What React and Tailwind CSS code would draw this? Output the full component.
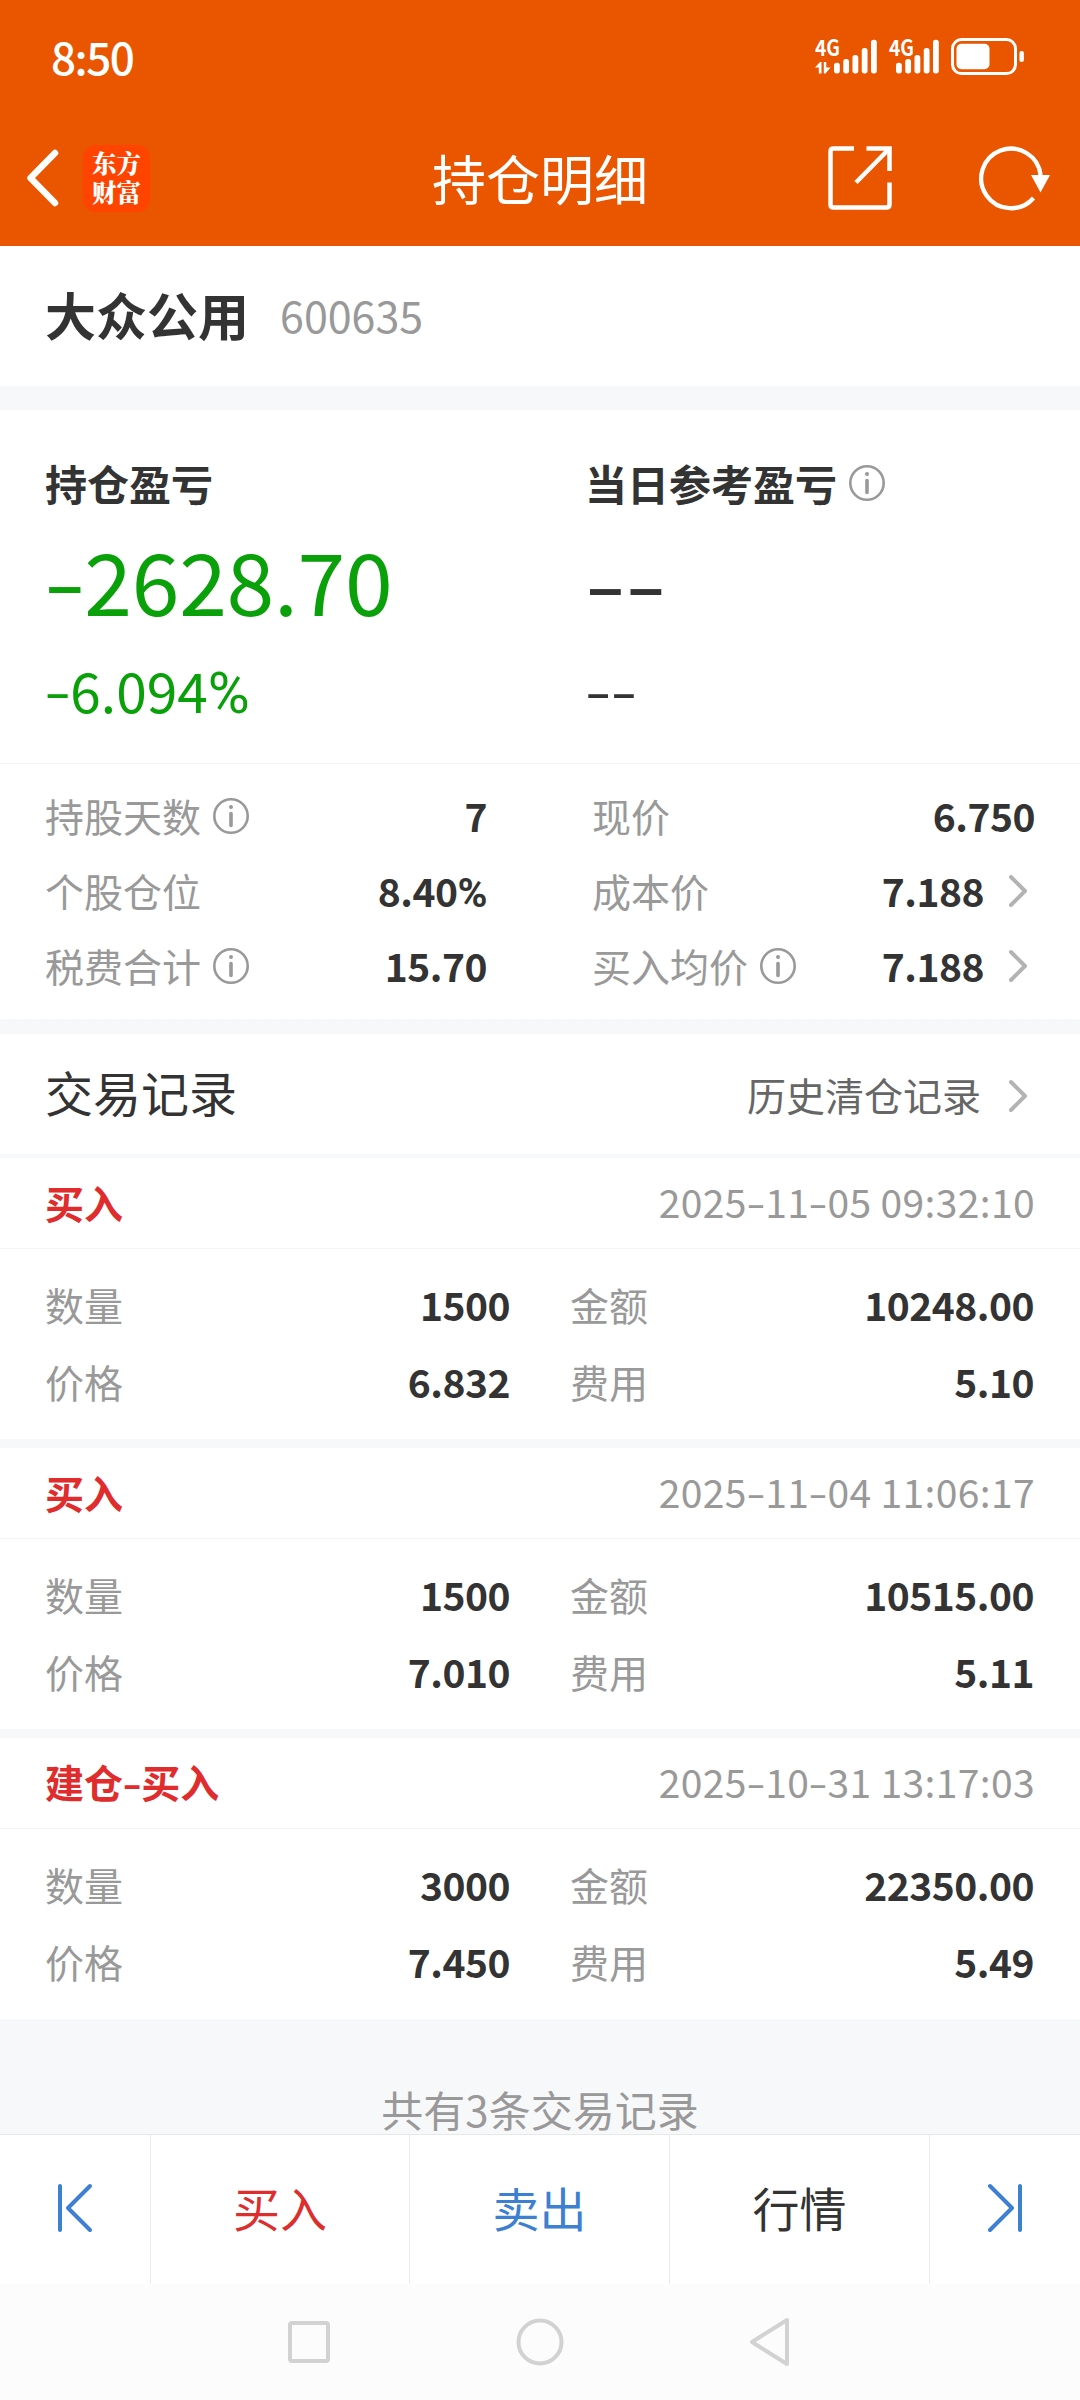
import React from "react";

const records = [
  { type: "买入", time: "2025-11-05 09:32:10", qty: "1500", amount: "10248.00", price: "6.832", fee: "5.10" },
  { type: "买入", time: "2025-11-04 11:06:17", qty: "1500", amount: "10515.00", price: "7.010", fee: "5.11" },
  { type: "建仓-买入", time: "2025-10-31 13:17:03", qty: "3000", amount: "22350.00", price: "7.450", fee: "5.49" },
];

/* Sets hyphens in a face with a wide dash and percent signs in a narrow one. */
function Fig({ children }) {
  return children.split(/(-+|%)/).map((part, i) => {
    if (part === "--") {
      return <span key={i} className="inline-block origin-left -translate-x-[0.02em] translate-y-[0.02em] scale-x-[1.12] scale-y-[0.85] font-['Inter',sans-serif] leading-none tracking-[-0.04em]">{part}</span>;
    }
    if (part === "-") {
      return <span key={i} className="inline-block translate-y-[0.02em] scale-x-[1.14] scale-y-[0.85] font-['Inter',sans-serif] leading-none">{part}</span>;
    }
    if (part === "%") {
      return <span key={i} className="font-['Roboto',sans-serif] text-[1.04em] leading-[0]">%</span>;
    }
    return part;
  });
}

function InfoIcon() {
  return (
    <svg width="36" height="36" viewBox="0 0 36 36" fill="none" stroke="#999" className="ml-[12px] shrink-0">
      <circle cx="18" cy="18" r="16.7" strokeWidth="2.6" />
      <path d="M18 15.5V27.5" strokeWidth="3.6" strokeLinecap="round" />
      <circle cx="18" cy="9" r="2" fill="#999" stroke="none" />
    </svg>
  );
}

function Chevron() {
  return (
    <svg width="20" height="34" viewBox="0 0 20 34" fill="none" stroke="#b3b3b3" strokeWidth="4" strokeLinecap="round" strokeLinejoin="round">
      <path d="M3 3L17 17L3 31" />
    </svg>
  );
}

function SignalBars({ x }) {
  const tops = [62.7, 59, 55, 48, 39.7];
  return tops.map((top, i) => (
    <rect key={i} x={x + i * 9.25} y={top - 38} width="5.8" height={73.4 - top} rx="2.6" fill="#fff" />
  ));
}

function StatusBar() {
  return (
    <div className="flex h-[112px] items-center justify-between pl-[51px] pr-[55px] text-white">
      <span className="pb-px text-[44px] font-medium leading-none tracking-[-1.5px]">8:50</span>
      <svg width="210" height="58" viewBox="0 -11 210 58">
        <text x="0" y="18" fontFamily="'Noto Sans CJK SC', sans-serif" fontWeight="700" fontSize="22.5" fill="#fff" textLength="25" lengthAdjust="spacingAndGlyphs">4G</text>
        <path d="M0 29.500L5 24H6.500V35.500H3.800V29.500ZM8.800 24H11.300V29.500H15.500L10.500 35.500H8.800Z" fill="#fff" />
        <SignalBars x={19} />
        <text x="74" y="18" fontFamily="'Noto Sans CJK SC', sans-serif" fontWeight="700" fontSize="22.5" fill="#fff" textLength="25" lengthAdjust="spacingAndGlyphs">4G</text>
        <SignalBars x={81} />
        <rect x="137.500" y="1.600" width="63" height="34" rx="9" fill="none" stroke="#fff" strokeWidth="3" />
        <rect x="141.500" y="5.800" width="33" height="25.500" rx="5" fill="#fff" />
        <rect x="204.500" y="13" width="4.400" height="11" rx="2" fill="#fff" />
      </svg>
    </div>
  );
}

function TitleBar() {
  return (
    <div className="grid h-[134px] grid-cols-[1fr_auto_1fr] items-center pb-[2px] text-white">
      <div className="flex items-center pl-[25px]">
        <svg width="36" height="58" viewBox="0 0 36 58" fill="none" stroke="#fff" strokeWidth="6.5" strokeLinecap="round" strokeLinejoin="round">
          <path d="M30 4L5.500 29L30 54" />
        </svg>
        <div className="ml-[22px] flex h-[67px] w-[67px] items-center justify-center rounded-[13px] bg-[#ff4400] pb-[3px] text-center font-['Noto_Serif_CJK_SC','Noto_Sans_CJK_SC',serif] text-[24.5px] font-black leading-[29px]">
          <span>东方<br />财富</span>
        </div>
      </div>
      <h1 className="text-[54px] font-normal leading-none">持仓明细</h1>
      <div className="flex items-center justify-end pr-[28px]">
        <svg width="64" height="64" viewBox="0 0 64 64" fill="none" stroke="#fff" strokeWidth="4.5">
          <path d="M26 2.500H5.500Q2.500 2.500 2.500 5.500V58.500Q2.500 61.500 5.500 61.500H58.500Q61.500 61.500 61.500 58.500V36.500" />
          <path d="M38.500 2.500H61.500V25" />
          <path d="M61 3L28 36.500" />
        </svg>
        <svg width="74" height="66" viewBox="0 0 74 66" fill="none" className="ml-[86px]">
          <path d="M55.500 53A29.800 29.800 0 1 1 62.600 30" stroke="#fff" strokeWidth="4.300" />
          <path d="M53 30H72L62.500 47.500Z" fill="#fff" />
        </svg>
      </div>
    </div>
  );
}

function Stat({ label, value, info, link }) {
  return (
    <div className="flex h-[75px] items-center text-[39px] leading-none">
      <span className="text-[#999]">{label}</span>
      {info && <InfoIcon />}
      <span className="ml-auto font-bold tracking-[-0.5px] text-[#333]"><Fig>{value}</Fig></span>
      {link && <span className="ml-[24px] mr-[7px]"><Chevron /></span>}
    </div>
  );
}

function Field({ label, value }) {
  return (
    <div className="flex h-[77px] items-center justify-between text-[39px] leading-none">
      <span className="text-[#999]">{label}</span>
      <span className="font-bold tracking-[-0.5px] text-[#333]">{value}</span>
    </div>
  );
}

function Record({ r }) {
  return (
    <section className="h-[281px] bg-white">
      <div className="flex h-[91px] items-center justify-between border-b border-[#f3f4f6] pb-[2px] pl-[45px] pr-[45px] text-[39px] leading-none">
        <span className="font-bold text-[#e02c2c]"><Fig>{r.type}</Fig></span>
        <span className="tracking-[0.36px] text-[#999]"><Fig>{r.time}</Fig></span>
      </div>
      <div className="grid grid-cols-[465px_464px] gap-x-[60px] pl-[45px] pt-[17px]">
        <Field label="数量" value={r.qty} />
        <Field label="金额" value={r.amount} />
        <Field label="价格" value={r.price} />
        <Field label="费用" value={r.fee} />
      </div>
    </section>
  );
}

function StepIcon({ flip }) {
  return (
    <svg width="36" height="50" viewBox="0 0 36 50" fill="none" stroke="#3d7fd0" strokeWidth="4" strokeLinecap="round" strokeLinejoin="round" className={flip ? "-scale-x-100" : ""}>
      <path d="M3 3V47M33 3L11 25L33 47" />
    </svg>
  );
}

export default function App() {
  return (
    <div className="flex h-[2400px] w-[1080px] flex-col overflow-hidden bg-[#f7f8fa] font-['Noto_Sans_CJK_SC',sans-serif] text-[#333]">
      <header className="h-[246px] shrink-0 bg-[#ea5500]">
        <StatusBar />
        <TitleBar />
      </header>

      <section className="flex h-[140px] shrink-0 items-center bg-white pb-[4px] pl-[45px]">
        <span className="text-[51px] font-bold leading-none">大众公用</span>
        <span className="ml-[31px] text-[43px] leading-none text-[#999]">600635</span>
      </section>

      <section className="mt-6 h-[609px] shrink-0 bg-white">
        <div className="grid h-[354px] grid-cols-2 border-b border-[#f3f4f6]">
          <div className="flex flex-col pl-[45px] pt-[50px]">
            <div className="flex h-[46px] items-center text-[42px] font-bold leading-none">持仓盈亏</div>
            <div className="mt-[21px] flex h-[110px] items-center text-[86px] leading-none text-[#09a009]"><span className="tracking-[-0.3px]"><Fig>-2628.70</Fig></span></div>
            <div className="mt-[24px] flex h-[60px] items-center text-[55px] leading-none text-[#09a009]"><span><Fig>-6.094%</Fig></span></div>
          </div>
          <div className="flex flex-col pl-[45px] pt-[50px]">
            <div className="flex h-[46px] items-center text-[42px] font-bold leading-none">当日参考盈亏<InfoIcon /></div>
            <div className="mt-[23px] flex h-[110px] items-center text-[86px] leading-none"><span><Fig>--</Fig></span></div>
            <div className="mt-[22px] flex h-[60px] items-center text-[55px] leading-none"><span><Fig>--</Fig></span></div>
          </div>
        </div>
        <div className="grid grid-cols-[442px_443px] gap-x-[105px] pl-[45px] pt-[14px]">
          <Stat label="持股天数" value="7" info />
          <Stat label="现价" value="6.750" />
          <Stat label="个股仓位" value="8.40%" />
          <Stat label="成本价" value="7.188" link />
          <Stat label="税费合计" value="15.70" info />
          <Stat label="买入均价" value="7.188" info link />
        </div>
      </section>

      <section className="mt-[15px] flex h-[120px] shrink-0 items-center justify-between bg-white pl-[45px] pr-[52px]">
        <h2 className="pb-[6px] text-[48px] font-normal leading-none">交易记录</h2>
        <div className="flex items-center pt-[3px] text-[39px] leading-none text-[#666]">
          <span className="mr-[27px] pb-[2px]">历史清仓记录</span>
          <Chevron />
        </div>
      </section>

      <div className="mt-1 flex shrink-0 flex-col gap-[9px]">
        {records.map((r) => <Record key={r.time} r={r} />)}
      </div>

      <div className="flex h-[115px] shrink-0 items-end justify-center pb-[4px] text-[42px] leading-none text-[#999]">
        <span>共有3条交易记录</span>
      </div>

      <nav className="grid h-[150px] shrink-0 grid-cols-[151px_259px_260px_260px_150px] border-t border-[#e8e8e8] bg-white text-[47px] leading-none">
        <div className="flex items-center justify-center border-r border-[#ebebeb] pb-[4px]"><StepIcon /></div>
        <div className="flex items-center justify-center border-r border-[#ebebeb] pb-[7px] text-[#dd2e2e]">买入</div>
        <div className="flex items-center justify-center border-r border-[#ebebeb] pb-[7px] text-[#3d7fd0]">卖出</div>
        <div className="flex items-center justify-center border-r border-[#ebebeb] pb-[7px]">行情</div>
        <div className="flex items-center justify-center pb-[4px]"><StepIcon flip /></div>
      </nav>

      <div className="flex h-[116px] shrink-0 items-center justify-center bg-[#fcfcfc]">
        <svg width="44" height="44" viewBox="0 0 44 44" fill="none" stroke="#d2d2d2" strokeWidth="4"><rect x="3" y="3" width="38" height="38" rx="2" /></svg>
        <svg width="48" height="48" viewBox="0 0 48 48" fill="none" stroke="#d2d2d2" strokeWidth="4" className="mx-[185px]"><circle cx="24" cy="24" r="21.500" /></svg>
        <svg width="44" height="50" viewBox="0 0 44 50" fill="none" stroke="#d2d2d2" strokeWidth="4" strokeLinejoin="round"><path d="M38 3V47L3 25Z" /></svg>
      </div>
    </div>
  );
}
